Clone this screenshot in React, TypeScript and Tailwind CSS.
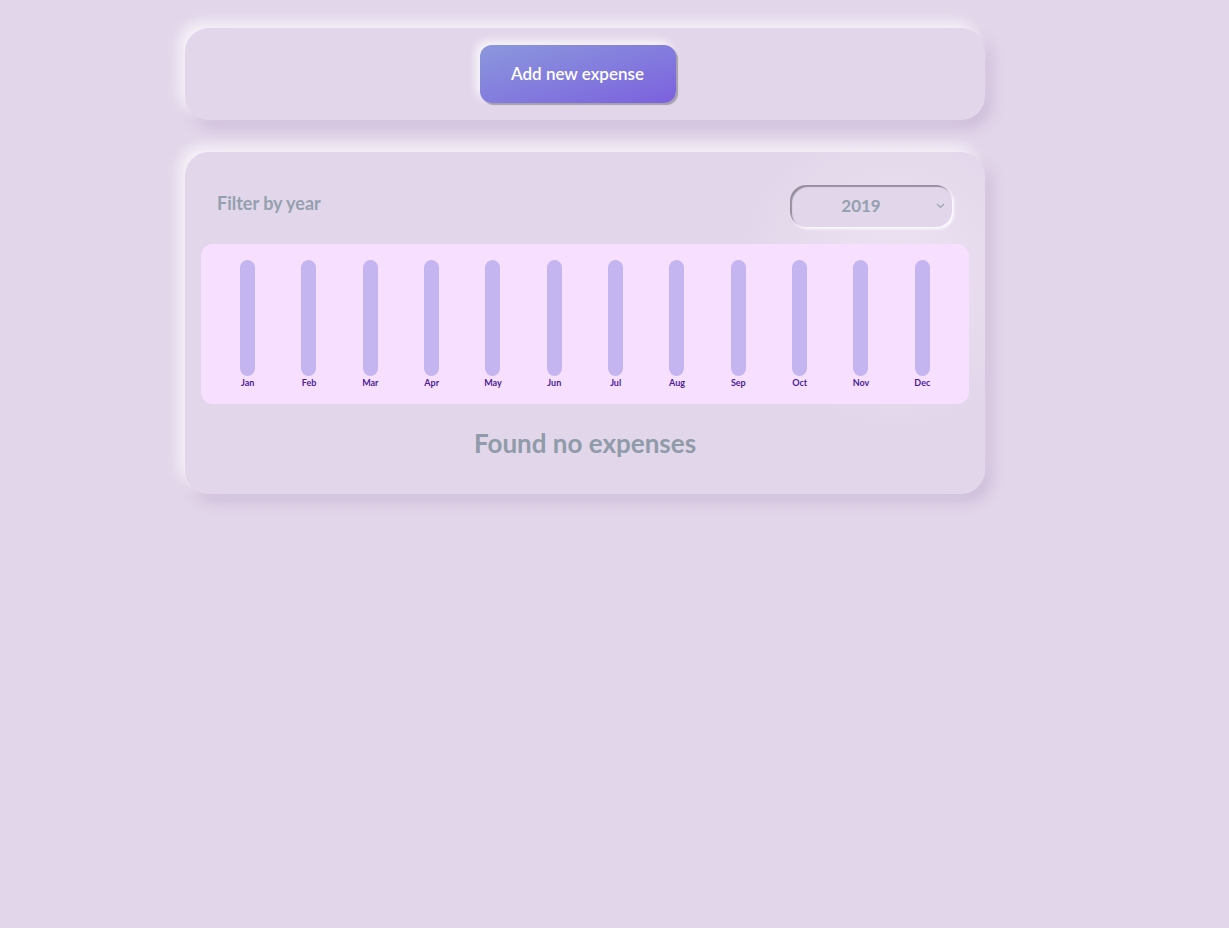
import React from "react";

const months = ["Jan", "Feb", "Mar", "Apr", "May", "Jun", "Jul", "Aug", "Sep", "Oct", "Nov", "Dec"];

const ChartBar = ({ label }: { label: string }) => (
  <div className="flex flex-col items-center">
    <div className="w-[15px] h-[116px] rounded-full bg-[#c4b5f0]" />
    <span className="mt-[1px] text-[9px] leading-[11px] font-bold text-[#4c1d95]">{label}</span>
  </div>
);

export default function App() {
  return (
    <div
      className="min-h-[928px] bg-[#e2d6ea] pt-[28px]"
      style={{ fontFamily: "Lato, 'Open Sans', sans-serif" }}
    >
      <div className="w-[800px] ml-[185px] flex flex-col gap-[32px]">
        {/* new expense */}
        <div className="h-[92px] rounded-[24px] bg-[#e2d6ea] shadow-[-6px_-6px_14px_rgba(255,255,255,0.75),6px_8px_14px_rgba(160,130,180,0.3)] flex items-center justify-center">
          <button className="ml-[-15px] w-[196px] h-[58px] rounded-[12px] bg-gradient-to-br from-[#8b97dc] to-[#7c60de] text-white text-[17px] font-semibold shadow-[2px_2px_1px_rgba(120,120,130,0.6),-4px_-4px_10px_rgba(255,255,255,0.8)]">
            Add new expense
          </button>
        </div>

        {/* expenses */}
        <div className="relative overflow-hidden rounded-[24px] bg-[#e2d6ea] shadow-[-6px_-6px_14px_rgba(255,255,255,0.75),6px_8px_14px_rgba(160,130,180,0.3)] p-4">
          <div className="pointer-events-none absolute left-[520px] top-[-30px] w-[380px] h-[300px] rounded-full bg-[radial-gradient(circle,rgba(245,235,248,0.6),rgba(226,214,234,0)_65%)]" />
          <div className="relative flex items-start justify-between pl-4 pr-[17px] pt-[17px] pb-[17px]">
            <span className="mt-[5px] text-[18px] font-bold text-[#94a0ae]">Filter by year</span>
            <div className="relative w-[162px] h-[42px] rounded-[16px] bg-[#e2d6ea] shadow-[inset_2px_2px_1px_rgba(130,125,140,0.8),2px_2px_3px_rgba(255,255,255,0.9)] flex items-center justify-center pr-[20px]">
              <span className="text-[17px] font-bold text-[#94a0ae]">2019</span>
              <svg className="absolute right-[7px] top-[18px]" width="9" height="6" viewBox="0 0 9 6" fill="none">
                <path d="M1 1l3.5 3.5L8 1" stroke="#9aa3b0" strokeWidth="1.2" />
              </svg>
            </div>
          </div>
          <div className="relative rounded-[12px] bg-[#f7e0ff] p-4 grid grid-cols-12">
            {months.map((m) => (
              <ChartBar key={m} label={m} />
            ))}
          </div>
          <p className="relative text-center text-[26px] font-bold text-[#8f9ba9] mt-[20px] mb-[15px]">
            Found no expenses
          </p>
        </div>
      </div>
    </div>
  );
}
